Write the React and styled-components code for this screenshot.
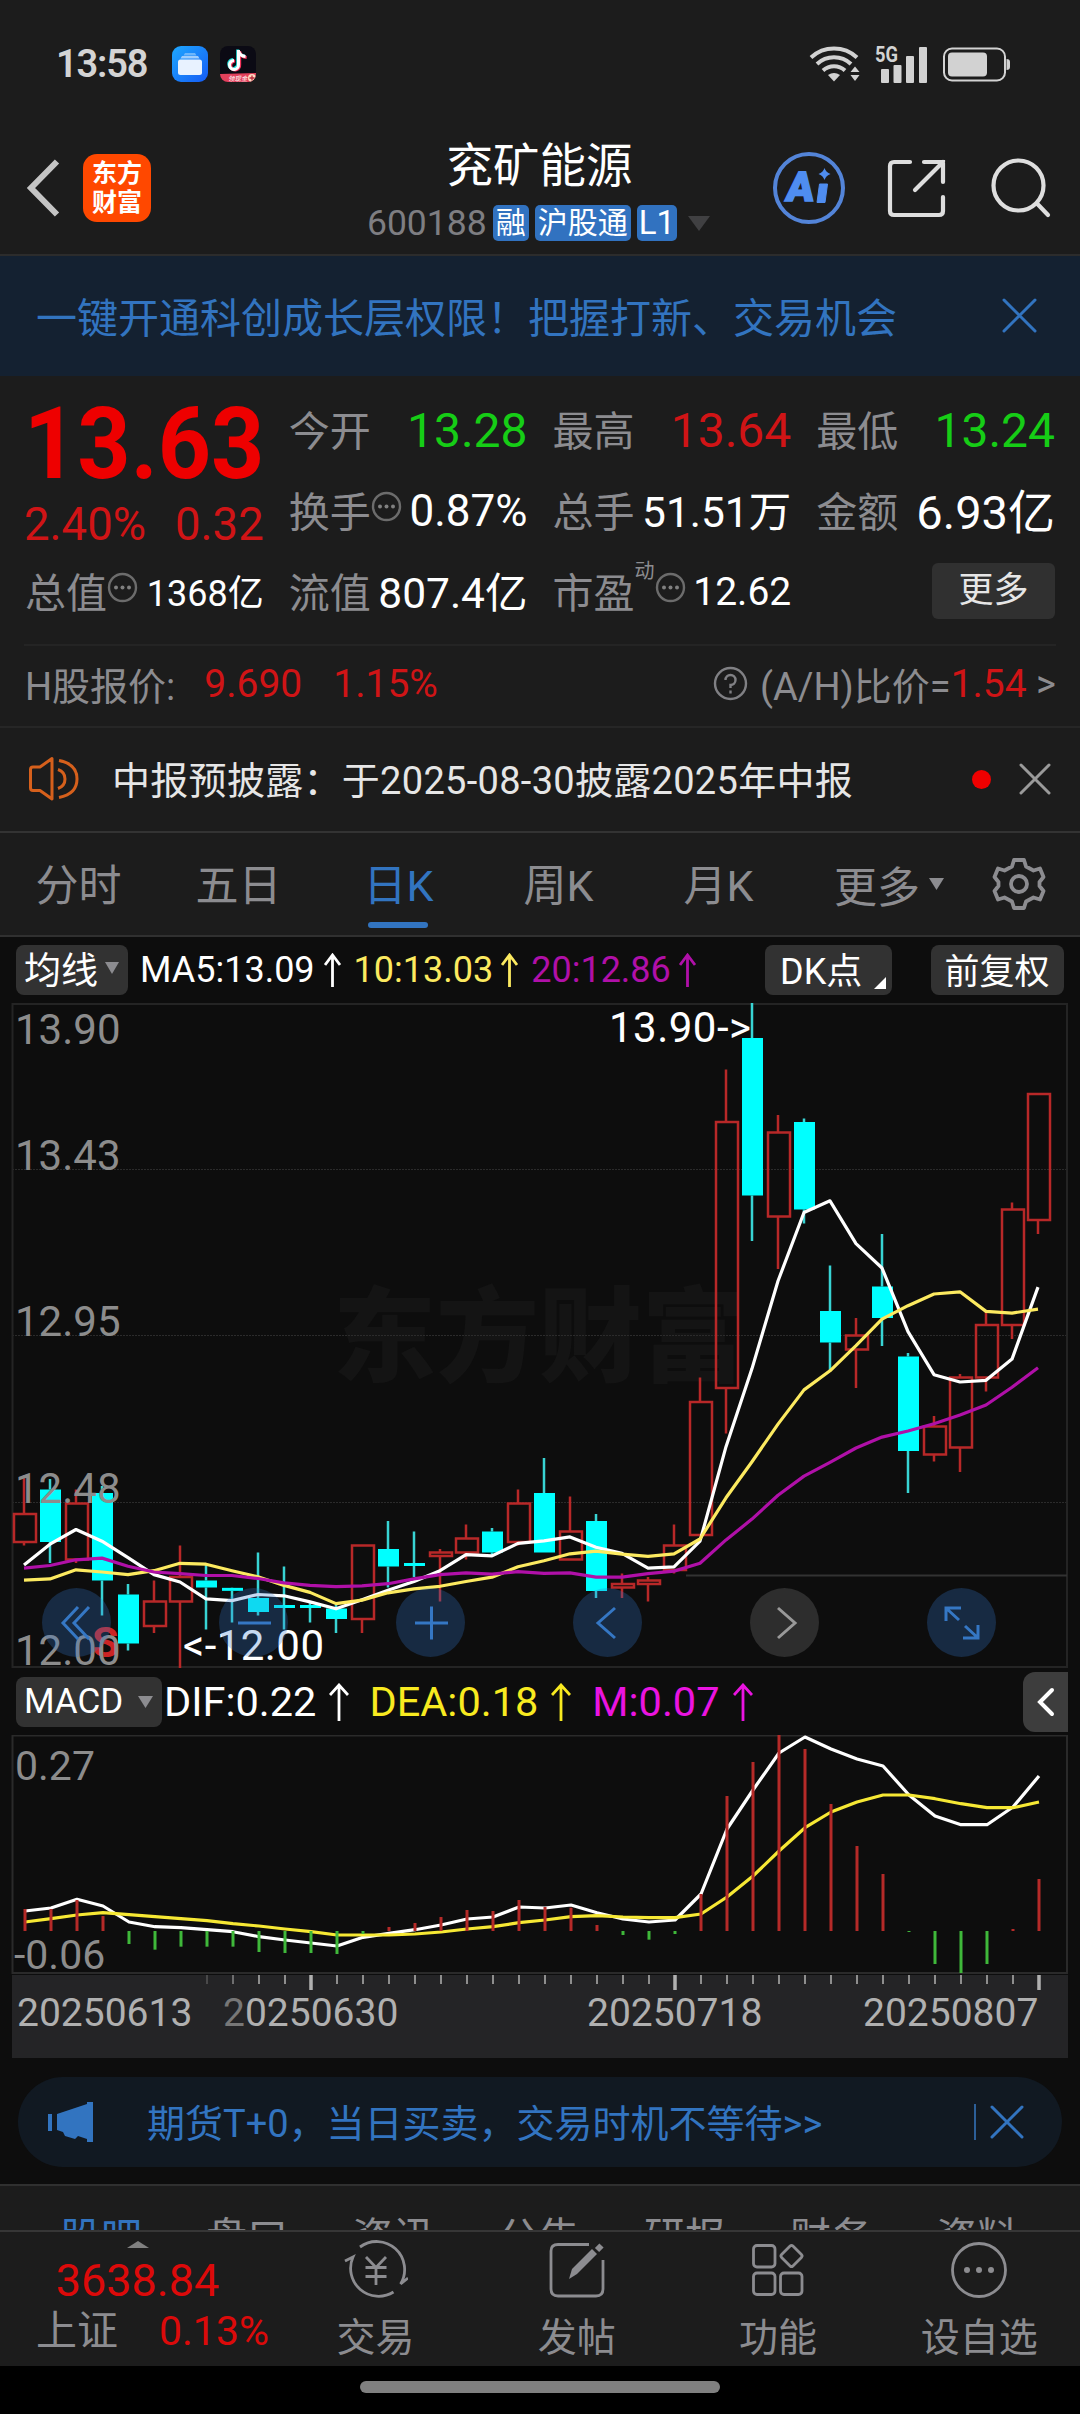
import React from 'react';
import styled, { createGlobalStyle } from 'styled-components';

const GlobalStyle = createGlobalStyle`
  * {
    box-sizing: border-box;
  }
  body {
    margin: 0;
    background: #0d0d0d;
    color: #fff;
    font-family: Roboto, 'Noto Sans CJK SC', sans-serif;
  }
  svg {
    display: block;
    flex: none;
  }
`;

const RED = '#d01416';
const GREEN = '#16cd16';
const BLUE = '#3274c0';
const GREY = '#8c8c90';

const Page = styled.div`
  width: 1080px;
  height: 2414px;
  overflow: hidden;
  display: flex;
  flex-direction: column;
`;

/* ---------- status bar + header ---------- */

const StatusBar = styled.div`
  height: 128px;
  padding: 0 70px 0 56px;
  display: flex;
  align-items: center;
  justify-content: space-between;
  background: #1c1c1c;
`;

const StatusGroup = styled.div`
  display: flex;
  align-items: center;
  gap: ${props => props.$gap}px;
`;

const Clock = styled.span`
  font-size: 38px;
  font-weight: 600;
  letter-spacing: -1.2px;
  color: #d4d4d4;
  margin-right: 13px;
`;

const Header = styled.header`
  height: 128px;
  padding: 0 29px 6px 26px;
  display: grid;
  grid-template-columns: 1fr auto 1fr;
  align-items: center;
  background: #1c1c1c;
  border-bottom: 2px solid #2c2c2c;
`;

const HeaderLeft = styled.div`
  display: flex;
  align-items: center;
  gap: 23px;
`;

const HeaderRight = styled.div`
  display: flex;
  align-items: center;
  justify-content: flex-end;
  gap: 38px;
`;

const Logo = styled.div`
  width: 68px;
  height: 68px;
  border-radius: 14px;
  background: #ff4800;
  display: grid;
  place-content: center;
  text-align: center;
  font-size: 25px;
  font-weight: 700;
  line-height: 29px;
`;

const Title = styled.div`
  display: flex;
  flex-direction: column;
  align-items: center;
  gap: 9px;
  padding: 0 0 1px 2px;
`;

const StockName = styled.h1`
  margin: 0;
  font-size: 46.5px;
  font-weight: 400;
  line-height: 62px;
`;

const CodeRow = styled.div`
  display: flex;
  align-items: center;
  gap: 6px;
  height: 35px;
  padding-right: 2px;
  font-size: 35.5px;
  color: #7e7e82;
  svg {
    margin-left: 5px;
  }
`;

const Tag = styled.span`
  height: 36px;
  line-height: 36px;
  padding: 0 ${props => props.$pad || 3}px;
  border-radius: 5px;
  background: #3172c0;
  color: #fff;
  font-size: ${props => props.$size || 30}px;
`;

/* ---------- notices ---------- */

const Promo = styled.div`
  height: 120px;
  padding: 0 43px 2px 36px;
  display: flex;
  align-items: center;
  justify-content: space-between;
  background: #142131;
  color: ${BLUE};
  font-size: 41px;
`;

const Quote = styled.section`
  height: 268px;
  padding: 11px 25px 0 26px;
  background: #1c1c1c;
`;

const QuoteGrid = styled.div`
  display: grid;
  grid-template-columns: repeat(4, minmax(0, 1fr));
  grid-template-rows: repeat(3, 81px);
  column-gap: 26px;
`;

const PriceCell = styled.div`
  grid-row: span 2;
  padding-top: 3px;
  margin-left: -2px;
  color: #ee0000;
`;

const Price = styled.div`
  font-size: 100px;
  font-weight: 700;
  line-height: 107px;
  transform: scaleX(0.93);
  transform-origin: left;
`;

const Change = styled.div`
  display: flex;
  justify-content: space-between;
  font-size: 45.5px;
  line-height: 56px;
  color: ${RED};
`;

const Cell = styled.div`
  display: flex;
  align-items: center;
  justify-content: space-between;
  white-space: nowrap;
`;

const CellLabel = styled.span`
  display: flex;
  align-items: center;
  margin-left: -1px;
  color: ${GREY};
  font-size: 41px;
  svg {
    margin: 0 0 5px 0;
  }
`;

const Sup = styled.sup`
  align-self: flex-start;
  font-size: 20px;
  line-height: 20px;
  margin-top: 1px;
`;

const CellValue = styled.span`
  font-size: ${props => props.$size}px;
  padding-top: ${props => props.$drop || 0}px;
  color: ${props => props.$color || '#fff'};
`;

const MoreButton = styled.button`
  width: 123px;
  height: 56px;
  margin: 2px 0 0 auto;
  border: 0;
  border-radius: 6px;
  background: #303030;
  color: #e6e6e6;
  font: inherit;
  font-size: 35px;
  line-height: 52px;
`;

const HShare = styled.div`
  height: 84px;
  padding: 0 24px;
  background: #1c1c1c;
  border-bottom: 2px solid #262626;
  font-size: 38px;
  color: ${GREY};
  > div {
    height: 100%;
    display: flex;
    align-items: center;
    border-top: 2px solid #242424;
    padding: 0 0 5px 1px;
  }
`;

const Rise = styled.span`
  color: ${RED};
  margin-left: ${props => props.$left || 0}px;
  font-size: 39px;
`;

const Ratio = styled.span`
  display: flex;
  align-items: center;
  margin-left: auto;
  svg {
    margin-right: 12px;
  }
`;

const Announcement = styled.div`
  height: 105px;
  padding: 0 29px 1px 28px;
  display: flex;
  align-items: center;
  background: #1c1c1c;
  border-bottom: 2px solid #333;
  color: #e6e6e6;
  font-size: 38px;
  letter-spacing: 0.3px;
`;

const AnnouncementText = styled.span`
  margin-left: 31px;
  padding-bottom: 3px;
  flex: 1;
`;

const Dot = styled.i`
  width: 19px;
  height: 19px;
  border-radius: 50%;
  background: #f00000;
  margin-right: 28px;
`;

/* ---------- period tabs ---------- */

const Periods = styled.nav`
  height: 104px;
  padding-right: 34px;
  display: flex;
  align-items: center;
  background: #1c1c1c;
  border-bottom: 2px solid #303030;
  font-size: 43px;
  color: ${GREY};
`;

const Period = styled.a`
  width: 160px;
  height: 100%;
  line-height: 107px;
  text-align: center;
  text-indent: -3px;
  position: relative;
  color: ${props => (props.$active ? BLUE : GREY)};
  &::after {
    content: '';
    display: ${props => (props.$active ? 'block' : 'none')};
    position: absolute;
    left: 48px;
    bottom: 7px;
    width: 60px;
    height: 6px;
    border-radius: 3px;
    background: ${BLUE};
  }
`;

const PeriodMore = styled.div`
  display: flex;
  align-items: center;
  gap: 9px;
  margin-left: 34px;
  margin-right: auto;
`;

/* ---------- chart ---------- */

const ChartToolbar = styled.div`
  height: 66px;
  padding: 0 16px;
  display: flex;
  align-items: center;
  font-size: 36px;
`;

const Chip = styled.div`
  position: relative;
  width: ${props => props.$width}px;
  height: 50px;
  padding: 0 9px ${props => props.$lift || 0}px 8px;
  display: flex;
  align-items: center;
  justify-content: ${props => props.$justify || 'space-between'};
  border-radius: 8px;
  background: #323232;
  font-size: ${props => props.$size || 36}px;
  white-space: nowrap;
  span {
    margin-left: 7px;
  }
`;

const CornerMark = styled.i`
  position: absolute;
  right: 6px;
  bottom: 6px;
  border-left: 12px solid transparent;
  border-bottom: 12px solid #fff;
`;

const Indicator = styled.span`
  display: flex;
  align-items: center;
  gap: ${props => props.$gap || 8}px;
  margin-left: ${props => props.$left}px;
  color: ${props => props.$color};
`;

const Spacer = styled.span`
  flex: ${props => (props.$width ? 'none' : 1)};
  width: ${props => props.$width || 0}px;
`;

const ChartArea = styled.div`
  position: relative;
  height: ${props => props.$height}px;
`;

const Controls = styled.div`
  position: absolute;
  left: 42px;
  top: 585px;
  display: flex;
  gap: 108px;
`;

const RoundButton = styled.div`
  width: 69px;
  height: 69px;
  border-radius: 50%;
  display: grid;
  place-content: center;
  color: ${props => (props.$muted ? '#999' : '#3577c4')};
  background: ${props => (props.$muted ? '#2d2d2d' : 'rgba(50, 118, 203, 0.28)')};
`;

const MacdBar = styled.div`
  height: 67px;
  padding: 0 12px 0 16px;
  display: flex;
  align-items: center;
  font-size: 41.5px;
`;

const Collapse = styled.div`
  width: 45px;
  height: 60px;
  margin-left: auto;
  display: grid;
  place-content: center;
  border-radius: 12px 0 0 12px;
  background: #3d3d3d;
`;

const Axis = styled.div`
  height: 83px;
  margin: 0 12px;
  background: #242426;
`;

/* ---------- bottom ---------- */

const TipWrap = styled.div`
  height: 126px;
  padding: 19px 18px 0;
`;

const Tip = styled.div`
  height: 90px;
  padding: 0 38px 0 30px;
  display: flex;
  align-items: center;
  border-radius: 45px;
  background: #111922;
  color: ${BLUE};
  font-size: 38px;
`;

const TipText = styled.span`
  margin-left: 53px;
  padding-bottom: 4px;
  flex: 1;
`;

const TipRule = styled.i`
  width: 2px;
  height: 36px;
  margin-right: 14px;
  background: #2c5f98;
`;

const Sections = styled.nav`
  height: 46px;
  padding: 27px 30px 0 28px;
  overflow: hidden;
  display: grid;
  grid-template-columns: repeat(7, 1fr);
  text-align: center;
  background: #1c1c1c;
  border-top: 2px solid #303030;
  font-size: 41px;
  line-height: 50px;
`;

const SectionTab = styled.a`
  color: ${props => (props.$active ? BLUE : GREY)};
`;

const NavBar = styled.footer`
  height: 136px;
  display: flex;
  background: #1c1c1c;
  border-top: 2px solid #363636;
`;

const IndexBox = styled.div`
  width: 275px;
  padding-top: 9px;
  display: flex;
  flex-direction: column;
  align-items: center;
  color: #dc0a0a;
`;

const IndexValue = styled.div`
  margin-top: 9px;
  font-size: 45px;
  line-height: 48px;
`;

const IndexRow = styled.div`
  width: 100%;
  padding-left: 36px;
  display: flex;
  gap: 41px;
  font-size: 41px;
  line-height: 52px;
  white-space: nowrap;
  span:first-child {
    color: ${GREY};
  }
`;

const NavItem = styled.div`
  flex: 1;
  padding-top: 6px;
  display: flex;
  flex-direction: column;
  align-items: center;
  gap: 8px;
  color: ${GREY};
  font-size: 39px;
  line-height: 56px;
`;

const HomeArea = styled.div`
  flex: 1;
  padding-top: 15px;
  background: #000;
`;

const HomeIndicator = styled.div`
  width: 360px;
  height: 12px;
  margin: 0 auto;
  border-radius: 6px;
  background: #808080;
`;

/* ---------- small glyphs ---------- */

const Cross = ({ size, width = 3, color = 'currentColor' }) => (
  <svg width={size} height={size} viewBox={`0 0 ${size} ${size}`} stroke={color} strokeWidth={width} strokeLinecap="round">
    <path d={`M2 2 L${size - 2} ${size - 2} M${size - 2} 2 L2 ${size - 2}`} />
  </svg>
);

const Triangle = ({ w, h, color, up }) => (
  <svg width={w} height={h} viewBox="0 0 10 10" preserveAspectRatio="none" fill={color}>
    <path d={up ? 'M0 10 L5 0 L10 10 Z' : 'M0 0 L10 0 L5 10 Z'} />
  </svg>
);

const UpArrow = ({ w = 17, h = 34 }) => (
  <svg width={w} height={h} viewBox={`0 0 ${w} ${h}`} fill="none" stroke="currentColor" strokeWidth="2.8">
    <path d={`M${w / 2} ${h} V2 M1 12 L${w / 2} 2 L${w - 1} 12`} />
  </svg>
);

const InfoDots = () => (
  <svg width="31" height="31" viewBox="0 0 31 31" fill="none">
    <circle cx="15.5" cy="15.5" r="13.5" stroke="#6c6c6c" strokeWidth="2.4" />
    <g fill="#808080">
      <circle cx="9" cy="15.5" r="2" />
      <circle cx="15.5" cy="15.5" r="2" />
      <circle cx="22" cy="15.5" r="2" />
    </g>
  </svg>
);

const FilesIcon = () => (
  <svg width="36" height="36" viewBox="0 0 36 36">
    <defs>
      <linearGradient id="files" x1="0" y1="0" x2="1" y2="1">
        <stop offset="0" stopColor="#1ea8ff" />
        <stop offset="1" stopColor="#155bf4" />
      </linearGradient>
    </defs>
    <rect width="36" height="36" rx="9" fill="url(#files)" />
    <path d="M13 7 h10 l1.500 2.500 h-13 Z" fill="#6db6fb" />
    <path d="M10 10 h16 l1.500 2.500 h-19 Z" fill="#9fcdfc" />
    <rect x="6" y="13.500" width="24" height="15.500" rx="2.500" fill="#e8f2ff" />
  </svg>
);

const TikIcon = () => (
  <svg width="36" height="36" viewBox="0 0 36 36">
    <defs>
      <clipPath id="tik">
        <rect width="36" height="36" rx="8" />
      </clipPath>
    </defs>
    <g clipPath="url(#tik)">
      <rect width="36" height="36" fill="#0b0a14" />
      <g fill="none" strokeWidth="3">
        <path d="M18.500 4 V18 A4.500 4.500 0 1 1 14 14 M18.500 5 Q20 10 25.500 10.500" stroke="#25e4e0" transform="translate(-0.800 -0.600)" />
        <path d="M18.500 4 V18 A4.500 4.500 0 1 1 14 14 M18.500 5 Q20 10 25.500 10.500" stroke="#f5335c" transform="translate(1.200 1)" />
        <path d="M18.500 4 V18.500 A4.500 4.500 0 1 1 14 14.500 M18.500 5 Q20 10 25.500 10.500" stroke="#fff" />
      </g>
      <path d="M0 28 L36 27 V36 H0 Z" fill="#e2405c" />
      <circle cx="32" cy="32" r="4" fill="#ffd9c0" />
      <path d="M32 29.500 v5 M29.500 32 h5" stroke="#b8293a" strokeWidth="1.300" />
      <text x="8" y="34.500" fontSize="6.500" fontStyle="italic" fill="#fff">领现金</text>
    </g>
  </svg>
);

const WifiIcon = () => (
  <svg width="52" height="38" viewBox="0 0 52 38" fill="none" stroke="#d2d2d2">
    <path d="M2 12.500 A34 34 0 0 1 48 12.500" strokeWidth="4" />
    <path d="M8 19 A25 25 0 0 1 42 19" strokeWidth="4" />
    <path d="M14 25.500 A16.500 16.500 0 0 1 36 25.500" strokeWidth="4" />
    <path d="M19 30 Q25 26 31 30 L25 36.500 Z" fill="#d2d2d2" stroke="none" />
    <path d="M41.500 27 L46 21.500 L50.500 27 Z M41.500 30 L46 36 L50.500 30 Z" fill="#d2d2d2" stroke="none" />
  </svg>
);

const SignalIcon = () => (
  <svg width="54" height="40" viewBox="0 0 54 40" fill="#d2d2d2" overflow="visible">
    <text x="0" y="18" fontSize="22" fontWeight="700" textLength="23" lengthAdjust="spacingAndGlyphs">5G</text>
    <rect x="6" y="25" width="8" height="14" rx="1" />
    <rect x="18.500" y="21" width="8" height="18" rx="1" />
    <rect x="31" y="12" width="8" height="27" rx="1" />
    <rect x="44" y="3" width="8" height="36" rx="1" />
  </svg>
);

const BatteryIcon = () => (
  <svg width="67" height="35" viewBox="0 0 67 35" fill="none">
    <rect x="1" y="1.500" width="61" height="32" rx="8" stroke="#d2d2d2" strokeWidth="2" />
    <rect x="5" y="5.500" width="39" height="24" rx="4" fill="#d2d2d2" />
    <path d="M63.500 12 q3.500 0 3.500 3 v5 q0 3 -3.500 3 Z" fill="#d2d2d2" />
  </svg>
);

const BackIcon = () => (
  <svg width="34" height="60" viewBox="0 0 34 60" fill="none" stroke="#c4c4c4" strokeWidth="6">
    <path d="M31 3.500 L5 30 L31 56.500" strokeLinejoin="miter" />
  </svg>
);

const AiIcon = () => (
  <svg width="76" height="76" viewBox="0 0 76 76" fill="none">
    <circle cx="38" cy="38" r="34" stroke="#5384d8" strokeWidth="4" />
    <g transform="translate(7 0) skewX(-7)">
      <text x="13" y="51" fontSize="41" fontWeight="900" fill="#4f8df0" stroke="#4f8df0" strokeWidth="1.500">A</text>
    </g>
    <path d="M48.500 34 h8 l-2.500 18.500 h-8 Z" fill="#4f8df0" stroke="#4f8df0" strokeLinejoin="round" />
    <path d="M53.500 18 Q55 22.500 59.500 24 Q55 25.500 53.500 30 Q52 25.500 47.500 24 Q52 22.500 53.500 18 Z" fill="#4f8df0" />
  </svg>
);

const ShareIcon = () => (
  <svg width="64" height="64" viewBox="0 0 64 64" fill="none" stroke="#dedede" strokeWidth="4.200" strokeLinecap="round">
    <path d="M25 6 H9 Q5 6 5 10 V55 Q5 59 9 59 H54 Q58 59 58 55 V41" />
    <path d="M39 6 H58 V26 M58 6 L30 34" />
  </svg>
);

const SearchIcon = () => (
  <svg width="64" height="64" viewBox="0 0 64 64" fill="none" stroke="#dedede" strokeWidth="4.200" strokeLinecap="round">
    <circle cx="31.500" cy="29.500" r="25" />
    <path d="M50 47.500 L61 59" />
  </svg>
);

const HelpIcon = () => (
  <svg width="35" height="35" viewBox="0 0 35 35" fill="none" stroke="#808084" strokeWidth="2.400">
    <circle cx="17.500" cy="17.500" r="15.500" />
    <path d="M12.500 14 A5 5 0 1 1 17.500 19 V22" />
    <path d="M17.500 24.500 V27.500" />
  </svg>
);

const SpeakerIcon = () => (
  <svg width="53" height="46" viewBox="0 0 53 46" fill="none" stroke="#d6601c" strokeWidth="3">
    <path d="M24 2.500 L12 11 H5 Q2.500 11 2.500 13.500 V32 Q2.500 34.500 5 34.500 H12 L24 43 Z" strokeLinejoin="round" />
    <path d="M30 13.500 Q37 16 37 23 Q37 30 30 32.500 M31 4.500 Q49 8 49 23 Q49 38 31 41.500" />
  </svg>
);

const GearIcon = () => (
  <svg width="54" height="54" viewBox="0 0 54 54" fill="none" stroke={GREY} strokeWidth="3.800">
    <path d="M22 3 H32 L34 9.500 L41.500 13.500 L48 11.500 L51.500 20 L47.500 25 V29 L51.500 34 L48 42.500 L41.500 40.500 L34 44.500 L32 51 H22 L20 44.500 L12.500 40.500 L6 42.500 L2.500 34 L6.500 29 V25 L2.500 20 L6 11.500 L12.500 13.500 L20 9.500 Z" strokeLinejoin="round" />
    <circle cx="27" cy="27" r="8" />
  </svg>
);

const HornIcon = () => (
  <svg width="46" height="42" viewBox="0 0 46 42" fill={BLUE}>
    <rect x="0" y="13" width="4" height="17" />
    <path d="M9 13 L39 3 V1 H45 V41 H39 V38 L30 35 L27 38 L17 35 L15 31 L9 29 Z" />
  </svg>
);

const NAV_ICONS = {
  trade: (
    <>
      <path d="M16 9 A28 28 0 0 1 56.600 46 L64 40" />
      <path d="M1 23 L9 19 A28 28 0 0 0 49.500 54" />
      <path d="M22 19 L32 29.500 L42 19 M32 29 V47 M21.500 29.500 H42.500 M21.500 38.500 H42.500" />
    </>
  ),
  post: (
    <>
      <path d="M44 6.500 H13 Q6 6.500 6 13 V51 Q6 58 13 58 H51 Q58 58 58 51 V22" />
      <path d="M24 41 L27 31 L47 11 L52 16 L32 36 Z" fill={GREY} stroke="none" />
      <path d="M52 12 L56.500 7.500" strokeWidth="6" />
    </>
  ),
  tools: (
    <>
      <rect x="7.500" y="7.500" width="21.500" height="21.500" rx="3.500" />
      <rect x="7.500" y="35" width="21.500" height="21.500" rx="3.500" />
      <rect x="34.500" y="35" width="21.500" height="21.500" rx="3.500" />
      <rect x="37.500" y="10" width="16" height="16" rx="2" transform="rotate(45 45.500 18)" />
    </>
  ),
  watch: (
    <>
      <circle cx="32" cy="32" r="26.500" />
      <g fill={GREY} stroke="none">
        <circle cx="20" cy="32" r="3" />
        <circle cx="32" cy="32" r="3" />
        <circle cx="44" cy="32" r="3" />
      </g>
    </>
  ),
};

const NavIcon = ({ name }) => (
  <svg width="64" height="64" viewBox="0 0 64 64" fill="none" stroke={GREY} strokeWidth="2.800">
    {NAV_ICONS[name]}
  </svg>
);

/* ---------- chart data ---------- */

// [rising, high, body top, body bottom, low]
const CANDLES = [
  [1, 12.55, 12.44, 12.36, 12.35], [0, 12.54, 12.51, 12.36, 12.3], [1, 12.51, 12.47, 12.31, 12.3],
  [0, 12.52, 12.5, 12.25, 12.15], [0, 12.24, 12.21, 12.07, 12.05], [1, 12.25, 12.19, 12.12, 12.1],
  [1, 12.35, 12.26, 12.19, 12.0], [0, 12.3, 12.25, 12.23, 12.11], [0, 12.23, 12.229, 12.221, 12.13],
  [0, 12.33, 12.2, 12.16, 12.15], [0, 12.29, 12.18, 12.172, 12.11], [0, 12.19, 12.18, 12.172, 12.13],
  [0, 12.18, 12.17, 12.14, 12.1], [1, 12.35, 12.35, 12.14, 12.1], [0, 12.42, 12.34, 12.29, 12.23],
  [0, 12.39, 12.3, 12.292, 12.26], [1, 12.34, 12.33, 12.32, 12.19], [1, 12.41, 12.37, 12.33, 12.31],
  [0, 12.4, 12.39, 12.33, 12.32], [1, 12.51, 12.47, 12.36, 12.35], [0, 12.6, 12.5, 12.33, 12.33],
  [1, 12.49, 12.39, 12.31, 12.31], [0, 12.44, 12.42, 12.22, 12.2], [1, 12.27, 12.24, 12.23, 12.2],
  [1, 12.26, 12.25, 12.24, 12.19], [1, 12.41, 12.35, 12.28, 12.27], [1, 12.83, 12.76, 12.38, 12.38],
  [1, 13.71, 13.56, 12.8, 12.67], [0, 13.9, 13.8, 13.35, 13.22], [1, 13.58, 13.53, 13.29, 13.14],
  [0, 13.57, 13.56, 13.31, 13.27], [0, 13.15, 13.02, 12.93, 12.85], [1, 13.0, 12.95, 12.91, 12.8],
  [0, 13.24, 13.09, 13.0, 12.92], [0, 12.9, 12.89, 12.62, 12.5], [1, 12.72, 12.69, 12.61, 12.59],
  [1, 12.84, 12.83, 12.63, 12.56], [1, 13.02, 12.98, 12.83, 12.79], [1, 13.33, 13.31, 12.98, 12.94],
  [1, 13.64, 13.64, 13.28, 13.24],
];

const MA5 = [1303, 1255, 1221, 1248, 1286, 1325, 1342, 1381, 1385, 1371, 1374, 1388, 1404, 1383, 1361, 1341, 1316, 1279, 1282, 1253, 1247, 1238, 1262, 1276, 1310, 1307, 1248, 1030, 850, 648, 490, 463, 562, 618, 765, 864, 881, 877, 828, 662];
const MA10 = [1338, 1335, 1314, 1319, 1325, 1316, 1299, 1301, 1316, 1330, 1350, 1366, 1392, 1384, 1367, 1358, 1352, 1341, 1331, 1307, 1293, 1277, 1271, 1278, 1283, 1277, 1243, 1148, 1065, 978, 899, 855, 797, 736, 705, 678, 673, 718, 722, 713];
const MA20 = [1310, 1304, 1291, 1287, 1306, 1319, 1323, 1327, 1327, 1334, 1344, 1350, 1353, 1351, 1346, 1335, 1325, 1321, 1324, 1318, 1322, 1321, 1331, 1331, 1323, 1317, 1299, 1245, 1197, 1142, 1098, 1066, 1033, 1008, 994, 977, 957, 934, 893, 848];

const BARS = [747, 747, 720, 768, 852, 869, 860, 860, 860, 876, 879, 879, 882, 822, 801, 789, 771, 750, 753, 720, 741, 743, 795, 825, 839, 822, 702, 408, 306, 225, 267, 432, 558, 642, 816, 912, 939, 912, 807, 657];
const DIF = [753, 744, 718, 738, 786, 800, 803, 809, 815, 830, 840, 849, 858, 832, 820, 809, 795, 777, 771, 741, 744, 735, 758, 777, 786, 780, 702, 507, 390, 279, 231, 267, 297, 318, 405, 468, 494, 494, 441, 348];
const DEA = [786, 776, 765, 758, 764, 770, 776, 782, 791, 798, 807, 815, 825, 825, 825, 822, 816, 807, 800, 788, 780, 770, 767, 771, 773, 773, 762, 711, 648, 573, 503, 456, 426, 405, 405, 416, 431, 443, 443, 426];

const STEP = 26;
const priceY = price => ((13.9 - price) / 1.9) * 665;
const maY = v => v / 2.306 - 3;
const macdY = v => v / 3 - 75;
const line = (values, toY, x0) => values.map((v, i) => `${x0 + i * STEP},${toY(v).toFixed(1)}`).join(' ');

const Candle = ({ x, data }) => {
  const [rising, high, top, bottom, low] = data;
  const t = priceY(top);
  const b = priceY(bottom);
  return (
    <g stroke={rising ? '#b82828' : '#38d4d4'} strokeWidth="2.5">
      <path d={`M${x} ${priceY(high)} V${t} M${x} ${b} V${priceY(low)}`} />
      {rising ? (
        <rect x={x - 10} y={t} width="22" height={Math.max(b - t, 1)} fill="none" />
      ) : (
        <rect x={x - 10} y={t} width="21" height={Math.max(b - t, 3)} fill="#00ffff" stroke="none" />
      )}
    </g>
  );
};

const PriceChart = () => (
  <svg width="1080" height="665" viewBox="0 0 1080 665" fill="none">
    <text x="333" y="371" fontSize="103" fontWeight="900" fill="#141414">东方财富</text>
    <g stroke="#2b2b2b" strokeDasharray="2 1">
      <path d="M12 166.500 H1067 M12 332.500 H1067 M12 499.500 H1067" />
    </g>
    <path d="M12.500 1 H1067 V664 H12.500 Z" stroke="#242424" strokeWidth="2" />
    <path d="M686 572.500 H1067" stroke="#323232" strokeWidth="2" />
    {CANDLES.map((c, i) => (
      <Candle key={i} x={24 + i * STEP} data={c} />
    ))}
    <text x="92" y="654" fontSize="43" fontWeight="700" fill="#cc2424">S</text>
    <g strokeWidth="3.200" strokeLinejoin="round">
      <polyline points={line(MA5, maY, 24)} stroke="#fff" />
      <polyline points={line(MA10, maY, 24)} stroke="#fcea60" />
      <polyline points={line(MA20, maY, 24)} stroke="#b010a8" />
    </g>
    <g fill="#8c8c8c" fontSize="42">
      <text x="15" y="41">13.90</text>
      <text x="15" y="167">13.43</text>
      <text x="15" y="333">12.95</text>
      <text x="15" y="500">12.48</text>
      <text x="15" y="662">12.00</text>
    </g>
    <g fill="#fff" fontSize="42">
      <text x="609" y="39" textLength="142">13.90-&gt;</text>
      <text x="183" y="657" textLength="141">&lt;-12.00</text>
    </g>
  </svg>
);

const MacdChart = () => (
  <svg width="1080" height="240" viewBox="0 0 1080 240" fill="none">
    <path d="M12.500 0.500 H1067 V238 H12.500 Z" stroke="#2a2a2a" strokeWidth="2" />
    <g fill="#8c8c8c" fontSize="41">
      <text x="15" y="45">0.27</text>
      <text x="14" y="234">-0.06</text>
    </g>
    <g strokeWidth="3.200" strokeLinejoin="round">
      <polyline points={line(DIF, macdY, 25)} stroke="#fff" />
      <polyline points={line(DEA, macdY, 25)} stroke="#f6e834" />
    </g>
    {BARS.map((v, i) => (
      <path key={i} d={`M${25 + i * STEP} 196 V${macdY(v)}`} stroke={v < 813 ? '#b52a28' : '#3fb83a'} strokeWidth="3" />
    ))}
  </svg>
);

const MAJOR_TICKS = [11, 25, 39];

const DateAxis = () => (
  <svg width="1056" height="83" viewBox="12 0 1056 83" fill="none">
    {BARS.map((_, i) => {
      const major = MAJOR_TICKS.includes(i);
      return (
        i > 6 && (
          <path
            key={i}
            d={`M${25 + i * STEP} 0 V${major ? 15 : 9}`}
            stroke={major ? '#b0b0b0' : '#8e8e8e'}
            strokeWidth={major ? 3.5 : 2}
            opacity={Math.min(1, (i - 6) * 0.35)}
          />
        )
      );
    })}
    <g fill="#b0b0b0" fontSize="39">
      <text x="17" y="51">20250613</text>
      <text x="223" y="51"><tspan fill="#777">2</tspan>0250630</text>
      <text x="587" y="51">20250718</text>
      <text x="863" y="51">20250807</text>
    </g>
  </svg>
);

const CONTROL_PATHS = [
  { d: 'M21 4 L6 20 L21 36 M32 4 L17 20 L32 36' },
  { d: 'M4 20 H37' },
  { d: 'M4 20 H37 M20.500 3.500 V36.500' },
  { d: 'M27 5 L10 20 L27 35' },
  { d: 'M13 5 L30 20 L13 35', muted: true },
  { d: 'M4 18 V5 H19 M5 6 L17 17 M36 22 V35 H21 M35 34 L23 23' },
];

const PERIODS = ['分时', '五日', '日K', '周K', '月K'];
const SECTIONS = ['股吧', '盘口', '资讯', '公告', '研报', '财务', '资料'];
const NAV = [['trade', '交易'], ['post', '发帖'], ['tools', '功能'], ['watch', '设自选']];

const QuotePanel = () => (
  <Quote>
    <QuoteGrid>
      <PriceCell>
        <Price>13.63</Price>
        <Change><span>2.40%</span><span>0.32</span></Change>
      </PriceCell>
      <Cell><CellLabel>今开</CellLabel><CellValue $size={48} $drop={5} $color={GREEN}>13.28</CellValue></Cell>
      <Cell><CellLabel>最高</CellLabel><CellValue $size={48} $drop={5} $color={RED}>13.64</CellValue></Cell>
      <Cell><CellLabel>最低</CellLabel><CellValue $size={48} $drop={5} $color={GREEN}>13.24</CellValue></Cell>
      <Cell><CellLabel>换手<InfoDots /></CellLabel><CellValue $size={44} $drop={4}>0.87%</CellValue></Cell>
      <Cell><CellLabel>总手</CellLabel><CellValue $size={42.5}>51.51万</CellValue></Cell>
      <Cell><CellLabel>金额</CellLabel><CellValue $size={47}>6.93亿</CellValue></Cell>
      <Cell><CellLabel>总值<InfoDots /></CellLabel><CellValue $size={36}>1368亿</CellValue></Cell>
      <Cell><CellLabel>流值</CellLabel><CellValue $size={42.5}>807.4亿</CellValue></Cell>
      <Cell><CellLabel>市盈<Sup>动</Sup><InfoDots /></CellLabel><CellValue $size={39} $drop={5}>12.62</CellValue></Cell>
      <Cell><MoreButton>更多</MoreButton></Cell>
    </QuoteGrid>
  </Quote>
);

const App = () => (
  <Page>
    <GlobalStyle />
    <StatusBar>
      <StatusGroup $gap={12}>
        <Clock>13:58</Clock>
        <FilesIcon />
        <TikIcon />
      </StatusGroup>
      <StatusGroup $gap={14}>
        <WifiIcon />
        <SignalIcon />
        <BatteryIcon />
      </StatusGroup>
    </StatusBar>
    <Header>
      <HeaderLeft>
        <BackIcon />
        <Logo>东方<br />财富</Logo>
      </HeaderLeft>
      <Title>
        <StockName>兖矿能源</StockName>
        <CodeRow>
          600188
          <Tag>融</Tag>
          <Tag>沪股通</Tag>
          <Tag $size={33} $pad={2}>L1</Tag>
          <Triangle w={22} h={15} color="#404042" />
        </CodeRow>
      </Title>
      <HeaderRight>
        <AiIcon />
        <ShareIcon />
        <SearchIcon />
      </HeaderRight>
    </Header>
    <Promo>
      <span>一键开通科创成长层权限！把握打新、交易机会</span>
      <Cross size={35} />
    </Promo>
    <QuotePanel />
    <HShare>
      <div>
        H股报价:
        <Rise $left={29}>9.690</Rise>
        <Rise $left={31}>1.15%</Rise>
        <Ratio>
          <HelpIcon />
          (A/H)比价=<Rise>1.54</Rise>&nbsp;&gt;
        </Ratio>
      </div>
    </HShare>
    <Announcement>
      <SpeakerIcon />
      <AnnouncementText>中报预披露：于2025-08-30披露2025年中报</AnnouncementText>
      <Dot />
      <Cross size={32} color="#9a9a9a" />
    </Announcement>
    <Periods>
      {PERIODS.map(p => (
        <Period key={p} $active={p === '日K'}>{p}</Period>
      ))}
      <PeriodMore>更多<Triangle w={15} h={12} color={GREY} /></PeriodMore>
      <GearIcon />
    </Periods>
    <ChartToolbar>
      <Chip $width={112} $size={37} $lift={4}>均线<Triangle w={14} h={12} color={GREY} /></Chip>
      <Indicator $left={12} $gap={9} $color="#fff">MA5:13.09<UpArrow /></Indicator>
      <Indicator $left={13} $color="#fcea60">10:13.03<UpArrow /></Indicator>
      <Indicator $left={13} $color="#b010a8">20:12.86<UpArrow /></Indicator>
      <Spacer />
      <Chip $width={127} $lift={4}><span>DK点</span><CornerMark /></Chip>
      <Spacer $width={39} />
      <Chip $width={133} $size={35} $lift={4} $justify="center">前复权</Chip>
    </ChartToolbar>
    <ChartArea $height={665}>
      <PriceChart />
      <Controls>
        {CONTROL_PATHS.map(c => (
          <RoundButton key={c.d} $muted={c.muted}>
            <svg width="40" height="40" viewBox="0 0 40 40" fill="none" stroke="currentColor" strokeWidth="3">
              <path d={c.d} />
            </svg>
          </RoundButton>
        ))}
      </Controls>
    </ChartArea>
    <MacdBar>
      <Chip $width={146} $size={35}>MACD<Triangle w={15} h={12} color={GREY} /></Chip>
      <Indicator $left={2} $gap={13} $color="#fff">DIF:0.22<UpArrow w={20} h={38} /></Indicator>
      <Indicator $left={20} $gap={13} $color="#f8ea20">DEA:0.18<UpArrow w={20} h={38} /></Indicator>
      <Indicator $left={21} $gap={13} $color="#ea14e0">M:0.07<UpArrow w={20} h={38} /></Indicator>
      <Collapse>
        <svg width="18" height="30" viewBox="0 0 18 30" fill="none" stroke="#fff" strokeWidth="4" strokeLinecap="round">
          <path d="M15 3 L3 15 L15 27" />
        </svg>
      </Collapse>
    </MacdBar>
    <ChartArea $height={240}>
      <MacdChart />
    </ChartArea>
    <Axis>
      <DateAxis />
    </Axis>
    <TipWrap>
      <Tip>
        <HornIcon />
        <TipText>期货T+0，当日买卖，交易时机不等待&gt;&gt;</TipText>
        <TipRule />
        <Cross size={34} />
      </Tip>
    </TipWrap>
    <Sections>
      {SECTIONS.map((s, i) => (
        <SectionTab key={s} $active={i === 0}>{s}</SectionTab>
      ))}
    </Sections>
    <NavBar>
      <IndexBox>
        <Triangle w={22} h={7} color="#808080" up />
        <IndexValue>3638.84</IndexValue>
        <IndexRow><span>上证</span><span>0.13%</span></IndexRow>
      </IndexBox>
      {NAV.map(([icon, label]) => (
        <NavItem key={icon}>
          <NavIcon name={icon} />
          {label}
        </NavItem>
      ))}
    </NavBar>
    <HomeArea>
      <HomeIndicator />
    </HomeArea>
  </Page>
);

export default App;
